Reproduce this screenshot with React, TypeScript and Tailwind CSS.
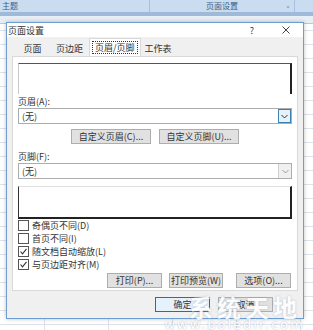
import React from "react";

const font = { fontFamily: '"Noto Sans CJK SC", "Noto Sans", sans-serif' };

function Check({ checked }: { checked?: boolean }) {
  return (
    <div className="w-[11px] h-[11px] border border-[#555] bg-white flex items-center justify-center">
      {checked && (
        <svg width="9" height="9" viewBox="0 0 9 9">
          <path d="M1.5 4.5 L3.5 6.8 L7.5 1.8" fill="none" stroke="#333" strokeWidth="1.1" />
        </svg>
      )}
    </div>
  );
}

function Btn({ children, w }: { children: React.ReactNode; w: string }) {
  return (
    <div className={`${w} h-[15px] bg-[#e1e1e1] border border-[#adadad] flex items-center justify-center text-[9px] text-[#333] leading-none`}>
      {children}
    </div>
  );
}

function Select({ active }: { active?: boolean }) {
  return (
    <div className="h-[16px] bg-white border border-[#acacac] flex items-center justify-between">
      <span className="pl-[3px] text-[9px] text-[#333] leading-none">(无)</span>
      <div
        className={`w-[13px] h-[14px] flex items-center justify-center ${
          active ? "bg-[#e5f1fb] border border-[#3c7fb1]" : "bg-[#f0f0f0] border-l border-[#cfcfcf]"
        }`}
      >
        <svg width="7" height="5" viewBox="0 0 7 5">
          <path d="M0.5 1 L3.5 4 L6.5 1" fill="none" stroke={active ? "#333" : "#999"} strokeWidth="1" />
        </svg>
      </div>
    </div>
  );
}

export default function App() {
  return (
    <div className="relative w-[313px] h-[330px] overflow-hidden bg-white" style={font}>
      {/* Excel background */}
      <div className="flex flex-col h-full">
        <div className="h-[12px] bg-[#c9dcf0] flex items-center text-[8px] text-[#3b5f8a]">
          <div className="w-[150px] pl-[2px] border-r border-[#a7c1df] h-full flex items-center">主题</div>
          <div className="w-[145px] h-full flex items-center justify-center border-r border-[#a7c1df] relative">
            页面设置
            <span className="absolute right-[3px] text-[6px]">▫</span>
          </div>
        </div>
        <div className="h-[4px] bg-[#9fb9d8]" />
        <div className="h-[8px] bg-[#e8eef5] border-b border-[#b9c8da]" />
        <div
          className="flex-1"
          style={{
            backgroundImage:
              "linear-gradient(#dde3ea 1px, transparent 1px), linear-gradient(90deg, #dde3ea 1px, transparent 1px)",
            backgroundSize: "64px 14px",
            backgroundPosition: "44px 6px",
          }}
        />
      </div>

      {/* Dialog window */}
      <div className="absolute left-[6px] top-[22px] w-[298px] h-[297px] bg-[#f0f0f0] border border-[#6d9dd3] shadow-[0_0_4px_rgba(0,0,0,0.25)] flex flex-col">
        <div className="h-[14px] bg-white flex items-center justify-between pl-[1px] pr-[13px]">
          <span className="text-[9px] text-[#333] leading-none">页面设置</span>
          <div className="flex items-center gap-[28px]">
            <span className="text-[9px] text-[#333] leading-none">?</span>
            <svg width="8" height="8" viewBox="0 0 8 8">
              <path d="M0.5 0.5 L7.5 7.5 M7.5 0.5 L0.5 7.5" stroke="#444" strokeWidth="1" />
            </svg>
          </div>
        </div>

        {/* Tabs */}
        <div className="flex items-end h-[18px] pl-[8px] mt-[1px]">
          <div className="h-[16px] px-[5px] flex items-center text-[9px] text-[#333] leading-none">
            <span className="w-[25px] text-center">页面</span>
          </div>
          <div className="h-[16px] px-[6px] flex items-center text-[9px] text-[#333] leading-none">页边距</div>
          <div className="h-[18px] px-[2px] flex items-center bg-white border-x border-t border-[#d9d9d9] text-[9px] text-[#333] leading-none">
            <span className="border border-dotted border-[#333] px-[2px] py-[1px]">页眉/页脚</span>
          </div>
          <div className="h-[16px] px-[4px] flex items-center text-[9px] text-[#333] leading-none">工作表</div>
        </div>

        {/* Panel */}
        <div className="mx-[5px] bg-white border border-[#d9d9d9] flex flex-col px-[5px] pt-[6px] pb-[2px]">
          <div className="h-[31px] bg-white border-t border-[#555] border-l border-l-[#c8c8c8] border-r-2 border-r-[#222]" />
          <div className="text-[9px] text-[#333] leading-none mt-[3px]">页眉(A):</div>
          <div className="mt-[2px]">
            <Select active />
          </div>
          <div className="flex justify-center gap-[8px] mt-[5px]">
            <Btn w="w-[80px]">自定义页眉(C)...</Btn>
            <Btn w="w-[80px]">自定义页脚(U)...</Btn>
          </div>
          <div className="text-[9px] text-[#333] leading-none mt-[8px]">页脚(F):</div>
          <div className="mt-[2px]">
            <Select />
          </div>
          <div className="h-[33px] mt-[7px] bg-white border-l border-l-[#333] border-b-2 border-b-[#222] border-r-2 border-r-[#222] border-t border-t-[#e0e0e0]" />
          <div className="flex flex-col gap-[1px] text-[9px] text-[#333] leading-none">
            <div className="flex items-center gap-[3px] h-[12px]"><Check />奇偶页不同(D)</div>
            <div className="flex items-center gap-[3px] h-[12px]"><Check />首页不同(I)</div>
            <div className="flex items-center gap-[3px] h-[12px]"><Check checked />随文档自动缩放(L)</div>
            <div className="flex items-center gap-[3px] h-[12px]"><Check checked />与页边距对齐(M)</div>
          </div>
          <div className="flex justify-end mt-[3px] pr-[1px]">
            <Btn w="w-[55px]">打印(P)...</Btn>
            <div className="w-[7px]" />
            <Btn w="w-[54px]">打印预览(W)</Btn>
            <div className="w-[13px]" />
            <Btn w="w-[55px]">选项(O)...</Btn>
          </div>
        </div>

        {/* Bottom area with OK/Cancel under watermark */}
        <div className="flex-1 flex items-center justify-end gap-[8px] pr-[30px] relative">
          <div className="w-[55px] h-[15px] bg-[#e5f1fb] border border-[#0078d7] flex items-center justify-center text-[9px] text-[#333]">确定</div>
          <div className="w-[55px] h-[15px] bg-[#e1e1e1] border border-[#adadad] flex items-center justify-center text-[9px] text-[#333]">取消</div>
          <div className="absolute right-[2px] top-[4px] flex flex-col items-end pointer-events-none">
            <span className="text-[24px] font-bold text-white leading-[24px] tracking-[4px] opacity-90 [text-shadow:0_0_2px_rgba(120,140,170,0.6)]">系统天地</span>
          </div>
        </div>
      </div>
      <div className="absolute right-[8px] bottom-[-2px] text-[13px] leading-[15px] text-white tracking-[2px] [text-shadow:0_0_2px_rgba(120,140,170,0.7)]" style={{ fontFamily: '"DejaVu Sans", sans-serif' }}>
        www.poledir.com
      </div>
    </div>
  );
}
